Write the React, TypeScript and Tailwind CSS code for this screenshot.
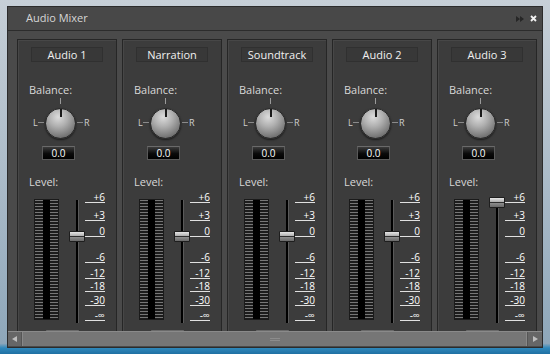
import React from "react"

type Mark = { label: string; h: string }

// distances between scale underlines, top to bottom
const marks: Mark[] = [
  { label: "+6", h: "h-[12px]" },
  { label: "+3", h: "h-[18px]" },
  { label: "0", h: "h-[16px]" },
  { label: "-6", h: "h-[26px]" },
  { label: "-12", h: "h-[16px]" },
  { label: "-18", h: "h-[13px]" },
  { label: "-30", h: "h-[14px]" },
  { label: "-∞", h: "h-[15px]" },
]

const channels = [
  { name: "Audio 1", fader: 40 },
  { name: "Narration", fader: 40 },
  { name: "Soundtrack", fader: 40 },
  { name: "Audio 2", fader: 40 },
  { name: "Audio 3", fader: 6 },
]

function Knob() {
  return (
    <div className="flex flex-col items-center">
      <div className="w-px h-[6px] bg-[#9a9a9a]" />
      <div className="mt-[4px] relative w-[31px] h-[31px] rounded-full border border-[#2a2a2a] bg-[radial-gradient(circle_at_42%_28%,#dcdcdc_0%,#b0b0b0_35%,#7c7c7c_70%,#4a4a4a_100%)] shadow-[0_1px_2px_rgba(0,0,0,0.6)]">
        <div className="absolute left-[14px] top-0 w-[2px] h-[8px] bg-[#1a1a1a]" />
      </div>
    </div>
  )
}

function ValueBox({ className }: { className: string }) {
  return (
    <div
      className={`h-[14px] w-[33px] border border-[#5a5a5a] border-t-[#6a6a6a] bg-[linear-gradient(to_bottom,#3c3c3c_0%,#0a0a0a_55%,#000_100%)] text-[10px] leading-[12px] text-center text-white ${className}`}
    >
      0.0
    </div>
  )
}

function Channel({ name, fader }: { name: string; fader: number }) {
  return (
    <div className="w-[100px] h-[310px] shrink-0 border border-[#262626] bg-[#3c3c3c] shadow-[inset_1px_1px_0_#474747] flex flex-col">
      <div className="mt-[7px] mx-auto w-[72px] h-[15px] border border-[#303030] bg-[#383838] text-[11px] leading-[13px] text-center text-[#f0f0f0]">
        {name}
      </div>

      <div className="mt-[21px] pl-[11px] text-[11px] leading-[14px] text-[#d8d8d8]">Balance:</div>

      <div className="ml-[15px] mt-[1px] flex items-end">
        <span className="w-[5px] text-[9px] leading-[10px] text-[#d0d0d0] mb-[11px]">L</span>
        <span className="w-[6px] h-px bg-[#8a8a8a] mb-[16px]" />
        <div className="ml-px">
          <Knob />
        </div>
        <span className="ml-px w-[6px] h-px bg-[#8a8a8a] mb-[16px]" />
        <span className="ml-px text-[9px] leading-[10px] text-[#d0d0d0] mb-[11px]">R</span>
      </div>

      <ValueBox className="mt-[7px] ml-[24px]" />

      <div className="mt-[15px] pl-[11px] text-[11px] leading-[14px] text-[#d8d8d8]">Level:</div>

      <div className="mt-[2px] flex h-[139px]">
        {/* peak meter */}
        <div className="ml-[16px] mt-[8px] w-[25px] h-[121px] flex border border-[#1a1a1a] bg-black">
          <div className="w-[8px] h-full bg-[repeating-linear-gradient(to_bottom,#777_0px,#777_1px,#1c1c1c_1px,#1c1c1c_3px)]" />
          <div className="w-[7px] h-full bg-black" />
          <div className="w-[8px] h-full bg-[repeating-linear-gradient(to_bottom,#777_0px,#777_1px,#1c1c1c_1px,#1c1c1c_3px)]" />
        </div>

        {/* fader */}
        <div className="relative ml-[10px] w-[16px]">
          <div className="mt-[9px] mx-auto w-[3px] h-[123px] bg-black border-r border-[#5a5a5a]" />
          <div
            className="absolute left-0 w-[16px] h-[11px] border border-[#1e1e1e] rounded-[1px] bg-[linear-gradient(to_bottom,#e6e6e6_0%,#b0b0b0_42%,#2e2e2e_42%,#2e2e2e_58%,#8c8c8c_58%,#6a6a6a_100%)]"
            style={{ top: fader }}
          />
        </div>

        {/* scale */}
        <div className="w-[20px] flex flex-col">
          {marks.map((m) => (
            <div
              key={m.label}
              className={`${m.h} flex items-end justify-end border-b border-[#e0e0e0] text-[10px] leading-[10px] text-white`}
            >
              {m.label}
            </div>
          ))}
        </div>
      </div>

      <ValueBox className="ml-[28px]" />
    </div>
  )
}

export default function App() {
  return (
    <div
      className="w-[550px] h-[354px] pt-[6px] px-[7px] pb-[6px] bg-[linear-gradient(to_bottom,#c6cfd7_0%,#aebdca_45%,#8ea7ba_97%,#2f88bb_98.3%,#1f70a3_100%)]"
      style={{ fontFamily: '"Open Sans", "Noto Sans", sans-serif' }}
    >
      <div className="h-full flex flex-col border border-[#2b2b2b] bg-[#4a4a4a]">
        <div className="h-[24px] shrink-0 flex items-center justify-between border-b border-[#2c2c2c] bg-[#484848] pl-[18px] pr-[5px]">
          <span className="text-[11px] text-[#d6d6d6]">Audio Mixer</span>
          <div className="flex items-center gap-[6px]">
            <svg width="8" height="6" viewBox="0 0 8 6">
              <path d="M0 0 L4 3 L0 6 Z M4 0 L8 3 L4 6 Z" fill="#262626" />
            </svg>
            <svg width="7" height="7" viewBox="0 0 7 7">
              <path d="M1 1 L6 6 M6 1 L1 6" stroke="#f2f2f2" strokeWidth="1.8" />
            </svg>
          </div>
        </div>

        <div className="h-[300px] shrink-0 overflow-hidden flex gap-[5px] pt-[8px] pl-[9px] bg-[#4a4a4a]">
          {channels.map((c) => (
            <Channel key={c.name} name={c.name} fader={c.fader} />
          ))}
        </div>

        <div className="h-[15px] shrink-0 flex border-t border-[#8a8a8a] bg-[#727272]">
          <div className="w-[14px] flex items-center justify-center bg-[#666] border-r border-[#555]">
            <svg width="5" height="6" viewBox="0 0 5 6">
              <path d="M5 0 L0 3 L5 6 Z" fill="#bdbdbd" />
            </svg>
          </div>
          <div className="flex-1 flex items-center justify-center bg-[#767676] border-x border-[#888]">
            <div className="w-[10px] h-[3px] border-y border-[#8c8c8c]" />
          </div>
          <div className="w-[15px] flex items-center justify-center bg-[#666] border-l border-[#555]">
            <svg width="5" height="6" viewBox="0 0 5 6">
              <path d="M0 0 L5 3 L0 6 Z" fill="#bdbdbd" />
            </svg>
          </div>
        </div>
      </div>
    </div>
  )
}
